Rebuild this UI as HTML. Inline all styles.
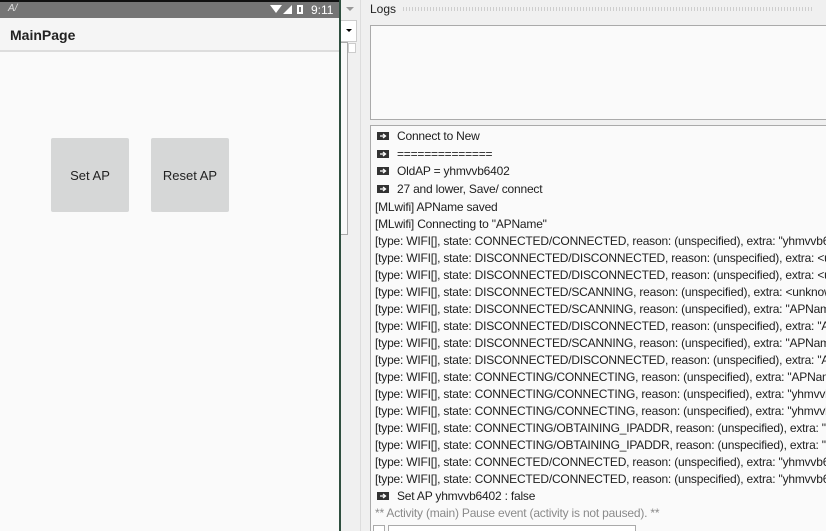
<!DOCTYPE html>
<html><head><style>
*{margin:0;padding:0;box-sizing:border-box}
html,body{width:826px;height:531px;overflow:hidden}
body{background:#f0f0f0;font-family:"Liberation Sans",sans-serif;position:relative}
.abs{position:absolute}
.clip{position:absolute;left:371px;top:126px;width:455px;height:405px;overflow:hidden}
.row{position:absolute;left:4px;font-size:12px;color:#1e1e1e;white-space:nowrap;line-height:17px;letter-spacing:-0.2px}
.ic{display:inline-block;width:12px;height:8px;margin-left:2px;margin-right:8px;vertical-align:0px}
</style></head><body>
<div class="abs" style="left:0;top:0;width:339px;height:531px;background:#fafafa"></div>
<div class="abs" style="left:0;top:0;width:339px;height:2px;background:#111"></div>
<div class="abs" style="left:0;top:2px;width:339px;height:16px;background:#757575"></div>
<div class="abs" style="left:8px;top:3px;font-size:10px;color:#ddd;font-style:italic">A/</div>
<svg class="abs" style="left:270px;top:4px" width="40" height="11"><polygon points="0,1 12,1 6,9" fill="#fff"/><polygon points="13,10 22,1 22,10" fill="#fff"/><rect x="27" y="1" width="6" height="9" fill="#fff"/><rect x="29" y="3" width="2" height="5" fill="#757575"/></svg>
<div class="abs" style="left:311px;top:3px;font-size:12px;color:#fff">9:11</div>
<div class="abs" style="left:0;top:18px;width:339px;height:34px;background:#f5f5f5;border-bottom:2px solid #ddd"></div>
<div class="abs" style="left:10px;top:27px;font-size:14px;font-weight:bold;color:#222">MainPage</div>
<div class="abs" style="left:51px;top:138px;width:78px;height:74px;background:#d6d7d7;border-radius:2px;font-size:13px;color:#222;text-align:center;line-height:76px">Set AP</div>
<div class="abs" style="left:151px;top:138px;width:78px;height:74px;background:#d6d7d7;border-radius:2px;font-size:13px;color:#222;text-align:center;line-height:76px">Reset AP</div>
<div class="abs" style="left:339px;top:0;width:2px;height:531px;background:#2f4f3f"></div>
<div class="abs" style="left:341px;top:0;width:20px;height:531px;background:#f0f0f0"></div>
<div class="abs" style="left:346px;top:7px;width:0;height:0;border-left:4px solid transparent;border-right:4px solid transparent;border-top:4px solid #999"></div>
<div class="abs" style="left:341px;top:20px;width:16px;height:22px;background:#fff;border:1px solid #ccc;border-left:none"></div>
<div class="abs" style="left:346px;top:29px;width:0;height:0;border-left:3px solid transparent;border-right:3px solid transparent;border-top:3px solid #000"></div>
<div class="abs" style="left:341px;top:42px;width:7px;height:193px;background:#fafafa;border:1px solid #aaa;border-left:none"></div>
<div class="abs" style="left:348px;top:43px;width:8px;height:10px;background:#fff;border:1px solid #ccc"></div>
<div class="abs" style="left:360px;top:0;width:1px;height:531px;background:#ddd"></div>
<div class="abs" style="left:370px;top:2px;font-size:12px;color:#222">Logs</div>
<div class="abs" style="left:402px;top:7px;width:412px;height:4px;background-image:radial-gradient(#aaa 0.7px,transparent 0.8px);background-size:3px 2px"></div>
<div class="abs" style="left:370px;top:25px;width:456px;height:95px;background:#fafafa;border:1px solid #aaa;border-right:none"></div>
<div class="abs" style="left:370px;top:125px;width:456px;height:406px;background:#fafafa;border:1px solid #aaa;border-right:none;border-bottom:none"></div>
<div class="clip">
<div class="row" style="top:2px"><svg class="ic" viewBox="0 0 12 8"><rect width="12" height="8" fill="#333"/><path d="M3 4H8M6 2L8.5 4L6 6" stroke="#fff" stroke-width="1.3" fill="none"/></svg>Connect to New</div>
<div class="row" style="top:20px"><svg class="ic" viewBox="0 0 12 8"><rect width="12" height="8" fill="#333"/><path d="M3 4H8M6 2L8.5 4L6 6" stroke="#fff" stroke-width="1.3" fill="none"/></svg>==============</div>
<div class="row" style="top:37px"><svg class="ic" viewBox="0 0 12 8"><rect width="12" height="8" fill="#333"/><path d="M3 4H8M6 2L8.5 4L6 6" stroke="#fff" stroke-width="1.3" fill="none"/></svg>OldAP = yhmvvb6402</div>
<div class="row" style="top:55px"><svg class="ic" viewBox="0 0 12 8"><rect width="12" height="8" fill="#333"/><path d="M3 4H8M6 2L8.5 4L6 6" stroke="#fff" stroke-width="1.3" fill="none"/></svg>27 and lower, Save/ connect</div>
<div class="row" style="top:73px">[MLwifi] APName saved</div>
<div class="row" style="top:90px">[MLwifi] Connecting to "APName"</div>
<div class="row" style="top:107px">[type: WIFI[], state: CONNECTED/CONNECTED, reason: (unspecified), extra: "yhmvvb6402"</div>
<div class="row" style="top:124px">[type: WIFI[], state: DISCONNECTED/DISCONNECTED, reason: (unspecified), extra: &lt;unknown</div>
<div class="row" style="top:141px">[type: WIFI[], state: DISCONNECTED/DISCONNECTED, reason: (unspecified), extra: &lt;unknown</div>
<div class="row" style="top:158px">[type: WIFI[], state: DISCONNECTED/SCANNING, reason: (unspecified), extra: &lt;unknown ssid</div>
<div class="row" style="top:175px">[type: WIFI[], state: DISCONNECTED/SCANNING, reason: (unspecified), extra: "APName"</div>
<div class="row" style="top:192px">[type: WIFI[], state: DISCONNECTED/DISCONNECTED, reason: (unspecified), extra: "APName"</div>
<div class="row" style="top:209px">[type: WIFI[], state: DISCONNECTED/SCANNING, reason: (unspecified), extra: "APName"</div>
<div class="row" style="top:226px">[type: WIFI[], state: DISCONNECTED/DISCONNECTED, reason: (unspecified), extra: "APName"</div>
<div class="row" style="top:243px">[type: WIFI[], state: CONNECTING/CONNECTING, reason: (unspecified), extra: "APName"</div>
<div class="row" style="top:260px">[type: WIFI[], state: CONNECTING/CONNECTING, reason: (unspecified), extra: "yhmvvb6402"</div>
<div class="row" style="top:277px">[type: WIFI[], state: CONNECTING/CONNECTING, reason: (unspecified), extra: "yhmvvb6402"</div>
<div class="row" style="top:294px">[type: WIFI[], state: CONNECTING/OBTAINING_IPADDR, reason: (unspecified), extra: "yhmvvb"</div>
<div class="row" style="top:311px">[type: WIFI[], state: CONNECTING/OBTAINING_IPADDR, reason: (unspecified), extra: "yhmvvb"</div>
<div class="row" style="top:328px">[type: WIFI[], state: CONNECTED/CONNECTED, reason: (unspecified), extra: "yhmvvb6402"</div>
<div class="row" style="top:345px">[type: WIFI[], state: CONNECTED/CONNECTED, reason: (unspecified), extra: "yhmvvb6402"</div>
<div class="row" style="top:362px"><svg class="ic" viewBox="0 0 12 8"><rect width="12" height="8" fill="#333"/><path d="M3 4H8M6 2L8.5 4L6 6" stroke="#fff" stroke-width="1.3" fill="none"/></svg>Set AP yhmvvb6402 : false</div>
<div class="row" style="top:379px;color:#8a8a8a">** Activity (main) Pause event (activity is not paused). **</div>
<div class="abs" style="left:2px;top:399px;width:12px;height:8px;border:1px solid #aaa;background:#fff"></div>
<div class="abs" style="left:17px;top:399px;width:248px;height:8px;border:1px solid #aaa;background:#fff"></div>
</div>
</body></html>
